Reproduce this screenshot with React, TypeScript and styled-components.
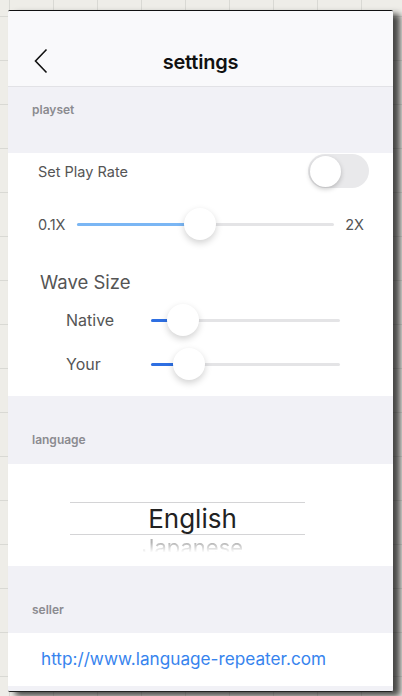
import styled, { createGlobalStyle } from 'styled-components';

const GlobalStyle = createGlobalStyle`
  html, body {
    margin: 0;
    padding: 0;
    width: 402px;
    height: 696px;
    overflow: hidden;
  }
  body {
    font-family: Inter, "Liberation Sans", sans-serif;
    background-color: #eeede8;
    background-image:
      linear-gradient(to right, #d9d9d4 1px, transparent 1px),
      linear-gradient(to bottom, #d9d9d4 1px, transparent 1px);
    background-size: 44px 44px;
    background-position: 9px 16px;
  }
`;

const App = () => {
  return (
    <>
      <GlobalStyle />
      <Page>
        <Card>
          <Header>
            <BackButton aria-label="back">
              <svg width="14" height="26" viewBox="0 0 14 26">
                <path d="M12.5 1.5 L1.5 13 L12.5 24.5" fill="none" stroke="#111" strokeWidth="1.6" />
              </svg>
            </BackButton>
            <Title>settings</Title>
          </Header>

          <SectionLabel height={66}>playset</SectionLabel>
          <Panel>
            <ToggleRow>
              <RowLabel>Set Play Rate</RowLabel>
              <Toggle>
                <Knob />
              </Toggle>
            </ToggleRow>
            <RateRow>
              <RowLabel>0.1X</RowLabel>
              <Slider fill="#7ab6f4" thumbAt={48} />
              <RowLabel>2X</RowLabel>
            </RateRow>
            <WaveTitle>Wave Size</WaveTitle>
            <WaveRow>
              <WaveLabel>Native</WaveLabel>
              <Slider fill="#2e6fe2" thumbAt={17} />
            </WaveRow>
            <WaveRow>
              <WaveLabel>Your</WaveLabel>
              <Slider fill="#2e6fe2" thumbAt={20} />
            </WaveRow>
          </Panel>

          <SectionLabel height={68}>language</SectionLabel>
          <PickerPanel>
            <Picker>
              <PickerSelected>English</PickerSelected>
              <PickerNext>Japanese</PickerNext>
            </Picker>
          </PickerPanel>

          <SectionLabel height={67}>seller</SectionLabel>
          <LinkPanel>
            <SellerLink>http://www.language-repeater.com</SellerLink>
          </LinkPanel>
          <Footer />
        </Card>
      </Page>
    </>
  );
};

const Slider = ({ fill, thumbAt }: { fill: string; thumbAt: number }) => (
  <Track>
    <TrackFill color={fill} style={{ width: `${thumbAt}%` }} />
    <Thumb style={{ left: `${thumbAt}%` }} />
  </Track>
);

export default App;

const Page = styled.div`
  padding: 10px 9px 4px 8px;
  height: 696px;
  box-sizing: border-box;
`;
const Card = styled.div`
  height: 682px;
  display: flex;
  flex-direction: column;
  background: #f1f1f6;
  border-top: 1.5px solid #111;
  border-bottom: 1.5px solid #222;
  border-radius: 2px;
  box-shadow: 7px 4px 6px rgba(0, 0, 0, 0.7);
  overflow: hidden;
  box-sizing: border-box;
`;
const Header = styled.div`
  height: 76px;
  flex: none;
  display: flex;
  align-items: center;
  justify-content: center;
  position: relative;
  background: #f9f9fb;
  border-bottom: 1px solid #e2e2e6;
  box-sizing: border-box;
  padding-top: 26px;
`;
const BackButton = styled.div`
  position: absolute;
  left: 26px;
  top: 37px;
  display: flex;
`;
const Title = styled.div`
  font-size: 20px;
  font-weight: 600;
  color: #111;
  letter-spacing: -0.2px;
`;
const SectionLabel = styled.div<{ height: number }>`
  height: ${p => p.height}px;
  flex: none;
  box-sizing: border-box;
  padding: 15px 0 0 24px;
  font-size: 12px;
  font-weight: 600;
  color: #8b8b90;
  background: #f1f1f6;
  &:nth-of-type(n + 3) {
    padding-top: 36px;
  }
`;
const Panel = styled.div`
  height: 243px;
  flex: none;
  background: #fff;
  display: flex;
  flex-direction: column;
  box-sizing: border-box;
`;
const ToggleRow = styled.div`
  display: flex;
  align-items: center;
  justify-content: space-between;
  padding: 1px 24px 0 30px;
  height: 34px;
`;
const RowLabel = styled.div`
  font-size: 14.5px;
  color: #555;
  flex: none;
`;
const Toggle = styled.div`
  width: 61px;
  height: 34px;
  border-radius: 17px;
  background: #e9e9eb;
  display: flex;
  align-items: center;
  padding: 0 2px;
  box-sizing: border-box;
`;
const Knob = styled.div`
  width: 31px;
  height: 31px;
  border-radius: 50%;
  background: #fff;
  box-shadow: 0 2px 5px rgba(0, 0, 0, 0.22);
`;
const RateRow = styled.div`
  display: flex;
  align-items: center;
  gap: 11px;
  padding: 0 29px 0 30px;
  margin-top: 16px;
  height: 40px;
`;
const Track = styled.div`
  position: relative;
  flex: 1;
  height: 3px;
  border-radius: 2px;
  background: #e4e4e6;
`;
const TrackFill = styled.div<{ color: string }>`
  height: 100%;
  border-radius: 2px;
  background: ${p => p.color};
`;
const Thumb = styled.div`
  position: absolute;
  top: 50%;
  width: 32px;
  height: 32px;
  margin: -16px 0 0 -16px;
  border-radius: 50%;
  background: #fff;
  box-shadow: 0 3px 7px rgba(0, 0, 0, 0.18);
`;
const WaveTitle = styled.div`
  font-size: 18.5px;
  color: #555;
  padding-left: 32px;
  margin-top: 27px;
`;
const WaveRow = styled.div`
  display: flex;
  align-items: center;
  padding: 0 53px 0 58px;
  height: 44px;
  &:nth-of-type(4) {
    margin-top: 5px;
  }
`;
const WaveLabel = styled.div`
  width: 85px;
  flex: none;
  font-size: 16px;
  color: #555;
`;
const PickerPanel = styled.div`
  height: 102px;
  flex: none;
  background: #fff;
  display: flex;
  justify-content: center;
  padding-top: 38px;
  padding-right: 26px;
  box-sizing: border-box;
  overflow: hidden;
`;
const Picker = styled.div`
  width: 235px;
  display: flex;
  flex-direction: column;
  align-items: center;
`;
const PickerSelected = styled.div`
  width: 100%;
  height: 33px;
  border-top: 1px solid #d4d4d6;
  border-bottom: 1px solid #d4d4d6;
  display: flex;
  align-items: center;
  justify-content: center;
  padding-left: 10px;
  font-size: 26px;
  color: #222;
  box-sizing: border-box;
`;
const PickerNext = styled.div`
  font-size: 22px;
  line-height: 22px;
  padding-left: 10px;
  margin-top: 1px;
  color: #b4b4b4;
  -webkit-mask-image: linear-gradient(to bottom, #000 30%, transparent 75%);
  mask-image: linear-gradient(to bottom, #000 30%, transparent 75%);
`;
const LinkPanel = styled.div`
  height: 53px;
  flex: none;
  background: #fff;
  display: flex;
  align-items: center;
  padding-left: 33px;
  padding-bottom: 3px;
  box-sizing: border-box;
`;
const SellerLink = styled.div`
  font-size: 17.2px;
  color: #3784ee;
`;
const Footer = styled.div`
  flex: 1;
  background: #f1f1f6;
`;
